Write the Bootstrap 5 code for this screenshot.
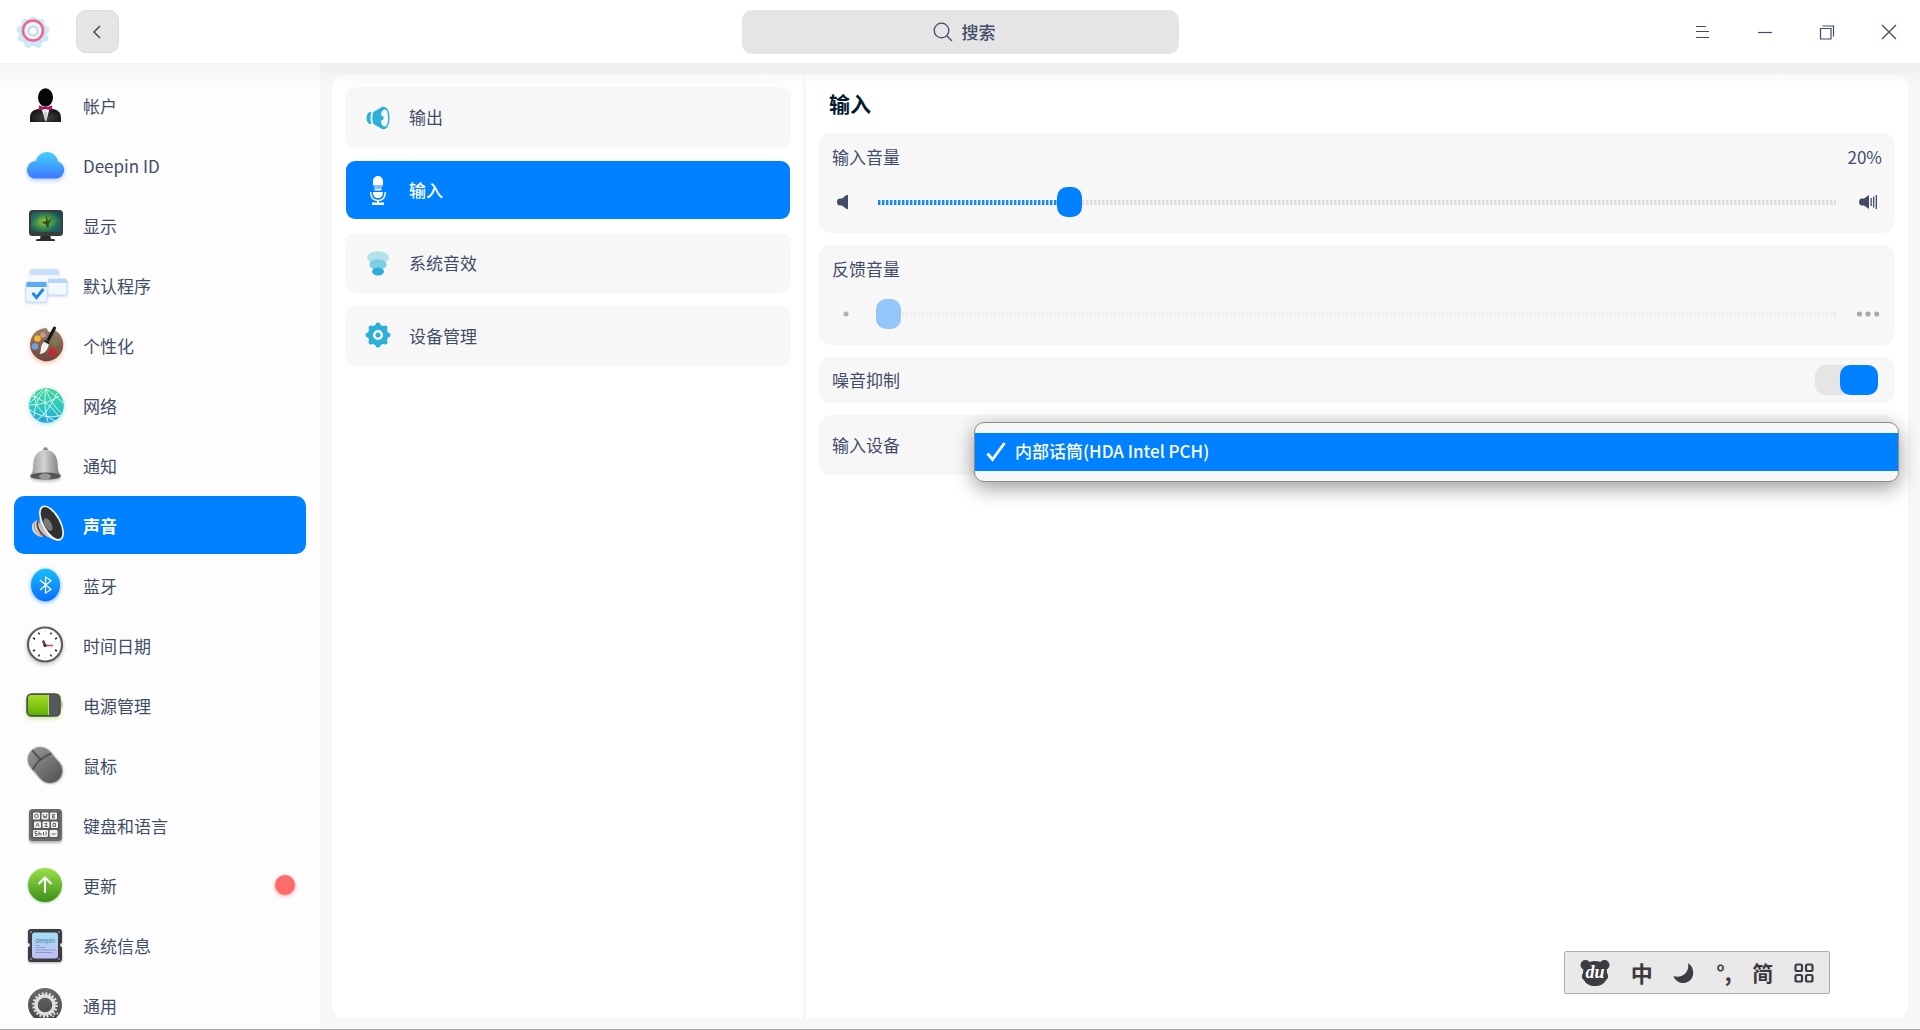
<!DOCTYPE html>
<html lang="zh-CN">
<head>
<meta charset="utf-8">
<meta name="viewport" content="width=device-width, initial-scale=1">
<title>控制中心</title>
<link href="https://cdn.jsdelivr.net/npm/bootstrap@5.3.0/dist/css/bootstrap.min.css" rel="stylesheet">
<style>
:root{--ink:#414d68;--accent:#0081ff;--panel:#f7f7f7}
body{font-family:"Noto Sans CJK SC","Noto Sans",sans-serif;font-size:17px;line-height:26px;color:var(--ink);background:var(--panel);border-bottom:1px solid #a8a8a8}
button{color:inherit}
.titlebar{height:63px;background:#fff;z-index:3}
.brand{width:43px;padding-left:15px}
.back{width:43px;height:43px;background:#e5e5e5;border:1px solid #dbdbdb;border-radius:10px;margin-left:33px}
.finder{width:437px;height:44px;background:#e5e5e5;border-radius:10px;padding-left:10px;gap:9px}
.finder input{width:36px;border:0;padding:0;background:none;outline:0;color:var(--ink)}
.finder input::placeholder{color:var(--ink);opacity:1;font-weight:500}
.side-zone{flex:1 1 0}
.winbtn{width:62px;height:62px;border:0;background:none}
.top-shade{background-image:linear-gradient(rgba(0,0,0,.034),rgba(0,0,0,0));background-repeat:no-repeat;background-size:100% 24px}
.sidebar{width:320px;background-color:#fdfdfd;padding-bottom:11px}
.sidebar .entries{padding:13px 14px 0;gap:2px;overflow:hidden}
.entry{height:58px;flex:none;border:0;background:none;border-radius:10px;padding:0 11px 0 7px;gap:14px;text-align:left}
.entry svg{flex:none}
.entry span:not(.dot-new){padding-top:1px}
.entry.on{background:var(--accent);color:#fff;font-weight:700}
.dot-new{width:20px;height:20px;border-radius:50%;background:#ff6a6a;box-shadow:0 1px 4px rgba(255,80,80,.55)}
.stage{padding:12px 12px 11px}
.sheet{background:#fff;border-radius:12px}
.sheet-shade{background-image:linear-gradient(rgba(0,0,0,.02),rgba(0,0,0,0));background-repeat:no-repeat;background-size:100% 16px}
.tabs-col{width:474px;flex:none;padding:12px 12px 0 13px;gap:13px;border-right:3px solid var(--panel)}
.tabx{height:60px;border:1px solid var(--panel);background:var(--panel);border-radius:10px;padding:0 16px;gap:15px;text-align:left}
.tabx.on{background:var(--accent);border-color:transparent;background-clip:padding-box;color:#fff;font-weight:500}
.detail{padding:12px 13px 0}
.detail h1{font-size:21px;line-height:32px;font-weight:700;color:#001a2e;margin:0 0 14px 10px}
.boxes{gap:12px}
.boxx{background:var(--panel);border-radius:12px;padding:11px 13px}
.slide-box{padding-bottom:16px}
.slide-row{margin-top:17px;height:30px}
.level{appearance:none;-webkit-appearance:none;background:none;height:30px;margin:0;min-width:0}
.level::-webkit-slider-runnable-track{height:30px;background-repeat:no-repeat;background-position:left 12px center;background-size:calc(100% - 24px) 5px;background-image:repeating-linear-gradient(90deg,#e0e0e0 0 2px,#ebebeb 2px 3px,transparent 3px 4px)}
.level::-webkit-slider-thumb{-webkit-appearance:none;width:25px;height:30px;border-radius:10px;background:var(--accent)}
.level.filled::-webkit-slider-runnable-track{background-image:linear-gradient(90deg,var(--panel),var(--panel)),repeating-linear-gradient(90deg,#1387f8 0 2px,#8ac3fa 2px 3px,transparent 3px 4px),repeating-linear-gradient(90deg,#e0e0e0 0 2px,#ebebeb 2px 3px,transparent 3px 4px);background-size:0 0,calc(20% - 4px) 5px,calc(100% - 24px) 5px}
.level:disabled::-webkit-slider-runnable-track{background-image:repeating-linear-gradient(90deg,#ededed 0 2px,#f2f2f2 2px 3px,transparent 3px 4px)}
.level:disabled::-webkit-slider-thumb{background:#94c6fa}
.row-sw{height:46px;padding:0 17px 0 13px}
.flip{appearance:none;-webkit-appearance:none;width:63px;height:30px;margin:0;border-radius:10px;background:#e5e5e5;display:flex;justify-content:flex-end}
.flip::before{content:"";width:38px;height:30px;border-radius:10px;background:#d0d0d0}
.flip:not(:checked){justify-content:flex-start}
.flip:checked::before{background:var(--accent)}
.row-dev{height:60px;padding:0 13px}
.devmenu{position:absolute;left:155px;right:-4px;top:7px;background:#f7f7f7;border:1px solid #8c8c8c;border-radius:10px;padding:10px 0;box-shadow:0 6px 20px rgba(0,0,0,.4);z-index:4}
.devmenu button{height:38px;border:0;background:var(--accent);color:#fff;padding:0 11px;gap:9px;font-weight:500}
.devmenu span{padding-bottom:2px}
.ime{position:absolute;right:90px;bottom:35px;width:266px;height:43px;background:#e9e9e9;border:1px solid #acacac;border-radius:2px;padding:0 15px;z-index:5;color:#3b3b3d}
.ime button{border:0;background:none;padding:0;display:flex;line-height:26px;font-weight:700}
.ime .big{font-size:22px;padding-bottom:2px}
.ime .mid{font-size:21px;padding-bottom:2px}
</style>
<script src="https://cdn.jsdelivr.net/npm/bootstrap@5.3.0/dist/js/bootstrap.bundle.min.js"></script>
</head>
<body class="vh-100 d-flex flex-column position-relative overflow-hidden">

<header class="titlebar d-flex align-items-center flex-shrink-0">
  <div class="side-zone d-flex align-items-center">
    <div class="brand">
      <svg width="36" height="36" viewBox="0 0 36 36" aria-label="控制中心" role="img">
        <defs><linearGradient id="gLogo" x1="0" y1="0" x2="1" y2="1"><stop offset="0" stop-color="#c3f1f8"/><stop offset="1" stop-color="#d6dcfa"/></linearGradient></defs>
        <g fill="url(#gLogo)"><circle cx="18" cy="18" r="14"/></g><g fill="#cdeafa"><circle cx="18" cy="6" r="3.500"/><circle cx="26" cy="8.500" r="3.500"/><circle cx="31" cy="15.500" r="3.500"/><circle cx="30" cy="24" r="3.500"/><circle cx="23" cy="30.500" r="3.500"/><circle cx="13" cy="30.500" r="3.500"/><circle cx="6" cy="24" r="3.500"/><circle cx="5" cy="15.500" r="3.500"/><circle cx="10" cy="8.500" r="3.500"/></g>
        <circle cx="18" cy="17" r="9" fill="#eaf6fd"/><circle cx="18" cy="17" r="4.500" fill="#fff" stroke="#cbdcec" stroke-width="2.500"/>
        <circle cx="18" cy="16.500" r="10" fill="none" stroke="#f2668c" stroke-width="2.600"/>
      </svg>
    </div>
    <button class="back d-flex align-items-center justify-content-center p-0" type="button" aria-label="返回"><svg width="16" height="16" viewBox="0 0 16 16" fill="none" stroke="#464f60" stroke-width="1.600"><path d="M10 2 4 8l6 6"/></svg></button>
  </div>
  <label class="finder d-flex align-items-center justify-content-center">
    <svg width="20" height="20" viewBox="0 0 20 20" fill="none" stroke="#414d68" stroke-width="1.300" aria-hidden="true"><circle cx="8.500" cy="8.500" r="7.300"/><path d="m13.700 13.700 5.300 5.300"/></svg>
    <input type="text" placeholder="搜索" aria-label="搜索">
  </label>
  <div class="side-zone d-flex justify-content-end">
    <button class="winbtn d-flex align-items-center justify-content-center" type="button" aria-label="菜单"><svg width="16" height="16" viewBox="0 0 16 16" stroke="#414d68" stroke-width="1.200"><path d="M1 2.500h10M1 7.500h13M1 13.500h13"/></svg></button>
    <button class="winbtn d-flex align-items-center justify-content-center" type="button" aria-label="最小化"><svg width="16" height="16" viewBox="0 0 16 16" stroke="#414d68" stroke-width="1.200"><path d="M1 8.500h14"/></svg></button>
    <button class="winbtn d-flex align-items-center justify-content-center" type="button" aria-label="还原"><svg width="16" height="16" viewBox="0 0 16 16" fill="none" stroke="#414d68" stroke-width="1.200"><path d="M1.500 4.500h10.500v10.500H1.500zM3.500 2h11v10.500"/></svg></button>
    <button class="winbtn d-flex align-items-center justify-content-center" type="button" aria-label="关闭"><svg width="16" height="16" viewBox="0 0 16 16" stroke="#414d68" stroke-width="1.300"><path d="m1 1 14 14M15 1 1 15"/></svg></button>
  </div>
</header>

<div class="d-flex flex-grow-1 overflow-hidden top-shade">
  <nav class="sidebar d-flex flex-column flex-shrink-0 top-shade" aria-label="模块">
    <div class="entries d-flex flex-column flex-grow-1">
      <button class="entry d-flex align-items-center" type="button">
        <svg width="48" height="48" viewBox="0 0 48 48"><defs><radialGradient id="gSuit" cx=".5" cy=".7" r=".6"><stop offset="0" stop-color="#444"/><stop offset="1" stop-color="#111"/></radialGradient></defs>
        <path d="M9 41V37c0-6 3-8 8-9l4-2h7l4 2c5 1 8 3 8 9v4z" fill="url(#gSuit)"/><path d="M20.500 28h8L25 41z" fill="#f3f3f3"/><path d="M24.500 30l1.500 2-.500 6-1 2-1-2-.500-6z" fill="#ccc"/><path d="M18 24.500l6.500 2 6.500-2v5l-6.500-1.500-6.500 1.500z" fill="#b0135e"/><ellipse cx="24.500" cy="16.500" rx="7.500" ry="9.300" fill="#060606"/></svg>
        <span>帐户</span></button>
      <button class="entry d-flex align-items-center" type="button">
        <svg width="48" height="48" viewBox="0 0 48 48"><defs><linearGradient id="gCloud" x2="0" y2="1"><stop offset="0" stop-color="#46d0fb"/><stop offset="1" stop-color="#3e78ff"/></linearGradient></defs>
        <path d="M13 37.500a9 9 0 0 1 3-17.500c1-5 5.500-9 11-9s10 4 11 9.500a8.700 8.700 0 0 1-1.500 17z" fill="url(#gCloud)" transform="translate(-1 0)" style="filter:drop-shadow(0 2px 2px rgba(70,130,255,.4))"/></svg>
        <span>Deepin ID</span></button>
      <button class="entry d-flex align-items-center" type="button">
        <svg width="48" height="48" viewBox="0 0 48 48"><defs><radialGradient id="gScr" cx=".45" cy=".5" r=".6"><stop offset="0" stop-color="#b4d234"/><stop offset=".4" stop-color="#4a9a4a"/><stop offset="1" stop-color="#164f58"/></radialGradient></defs>
        <path d="M20 33h9l1 5h3q1 0 1 2H15q0-2 1-2h3z" fill="#2c2c2c"/><rect x="8" y="9" width="34" height="26" rx="3.500" fill="#3a3c3c"/><rect x="10" y="11" width="30" height="20" rx="2" fill="url(#gScr)"/><path d="M11 12l10 0-10 10zM40 16l-12 14 12 1z" fill="#1b6a70" opacity=".5"/><path d="M25 14l2 6 4-3-3 6-1 5-2-4-5-3 5-1z" fill="#1d3b12" opacity=".8"/></svg>
        <span>显示</span></button>
      <button class="entry d-flex align-items-center" type="button">
        <svg width="48" height="48" viewBox="0 0 48 48"><g style="filter:drop-shadow(0 1px 1px rgba(60,120,200,.3))"><rect x="9" y="8" width="29" height="23" rx="2.500" fill="#f5f9fe"/><path d="M9 14v-3.500q0-2.500 2.500-2.500h24q2.500 0 2.500 2.500V14z" fill="#c8dffa"/><rect x="27" y="18" width="19" height="16" rx="2" fill="#f3f8fe" stroke="#c8dffa"/><path d="M27 22v-2q0-2 2-2h15q2 0 2 2v2z" fill="#b9d6f9"/><rect x="5" y="21" width="21" height="20" rx="1.500" fill="#eef5fd" stroke="#cfe2f8"/><path d="M5.500 26v-4q0-1 1-1h18q1 0 1 1v4z" fill="#5aa9f2"/></g><path d="m11.500 32 4 4.500L22.500 28" fill="none" stroke="#1d86f0" stroke-width="2.800"/></svg>
        <span>默认程序</span></button>
      <button class="entry d-flex align-items-center" type="button">
        <svg width="48" height="48" viewBox="0 0 48 48"><defs><linearGradient id="gPal" x2="0" y2="1"><stop offset="0" stop-color="#9a8171"/><stop offset="1" stop-color="#6a4437"/></linearGradient></defs>
        <path d="M24.500 7c2.500 0 1.500 3.500 4 4s4-3 6-1.500A16.600 16.600 0 1 1 24.500 7z" fill="url(#gPal)" style="filter:drop-shadow(0 2px 2px rgba(240,110,60,.45))"/><circle cx="16.500" cy="17.500" r="3.300" fill="#f6b62b"/><circle cx="22" cy="14" r="2.800" fill="#c69c85"/><circle cx="14" cy="25.500" r="3.300" fill="#6c9fe0"/><circle cx="31.500" cy="31" r="3.500" fill="#d51f35"/><circle cx="34" cy="22" r="2.800" fill="#74803e"/><path d="M33.500 7 27 19.500" stroke="#161616" stroke-width="3" stroke-linecap="round"/><path d="M24 18.500l5 3-1.500 3c-1 5-4 8-9 8.500 2-3 .500-8 4-11.500z" fill="#f4f1ec"/><path d="M24 18.500l5 3-1 2-5.300-3z" fill="#222"/></svg>
        <span>个性化</span></button>
      <button class="entry d-flex align-items-center" type="button">
        <svg width="48" height="48" viewBox="0 0 48 48"><defs><linearGradient id="gNet" x2="0" y2="1"><stop offset="0" stop-color="#45d692"/><stop offset=".6" stop-color="#2cc6c4"/><stop offset="1" stop-color="#2a9fdc"/></linearGradient></defs>
        <circle cx="25.500" cy="24.500" r="17.300" fill="url(#gNet)" style="filter:drop-shadow(0 1px 2px rgba(40,190,210,.5))"/><path d="M25 8c-6 6-11 14-12 27M25 8c3 9 8 17 15 24M25 8c-2 11-1 22 2 33M25 8c5 3 10 7 17 14M11 15c9 3 19 9 27 21M9 24c12 0 22-4 29-9M9 29c9 6 21 9 31 5M36 12c-5 11-12 22-20 27M14 12c-2 8 4 20 20 28M22 8 9 22" fill="none" stroke="#e9fffb" stroke-width="1" opacity=".85"/></svg>
        <span>网络</span></button>
      <button class="entry d-flex align-items-center" type="button">
        <svg width="48" height="48" viewBox="0 0 48 48"><defs><linearGradient id="gBell"><stop offset="0" stop-color="#9a9a9a"/><stop offset=".45" stop-color="#d2d2d2"/><stop offset="1" stop-color="#777"/></linearGradient></defs>
        <g style="filter:drop-shadow(0 2px 1px rgba(0,0,0,.2))"><circle cx="24.500" cy="8.500" r="2.300" fill="#8a8a8a"/><path d="M24.500 9c8 0 11.500 6 12 13 .500 6 0 8 3 12 2 3-4 5-15 5s-17-2-15-5c3-4 2.500-6 3-12 .500-7 4-13 12-13z" fill="url(#gBell)"/><ellipse cx="24.500" cy="35" rx="15" ry="3.600" fill="#555"/><ellipse cx="24" cy="35.500" rx="6" ry="3" fill="#999"/></g></svg>
        <span>通知</span></button>
      <button class="entry on d-flex align-items-center" type="button" aria-current="page">
        <svg width="48" height="48" viewBox="0 0 48 48"><defs><linearGradient id="gHorn"><stop offset="0" stop-color="#b8b8b8"/><stop offset="1" stop-color="#f4f4f4"/></linearGradient></defs>
        <path d="M12 22c-3 5 0 12 8 14l5-2-9-15z" fill="#d8d8d8"/><path d="M14 22c-2 4 0 10 7 13" stroke="#8a8a8a" fill="none"/><path d="M17 20c-2 4 1 13 8 15" stroke="#6d4a3a" fill="none" stroke-width="2"/><path d="M20 10c-3 12-2 21 5 25 6 3 11 6 15 4z" fill="url(#gHorn)"/><ellipse cx="30.500" cy="22" rx="8.500" ry="18.500" transform="rotate(-29 30.500 22)" fill="#303030" stroke="#f5f5f5" stroke-width="1.700"/><ellipse cx="27" cy="23.500" rx="3.500" ry="7" transform="rotate(-29 27 23.500)" fill="#7b7b7b"/></svg>
        <span>声音</span></button>
      <button class="entry d-flex align-items-center" type="button">
        <svg width="48" height="48" viewBox="0 0 48 48"><defs><linearGradient id="gBt" x2="0" y2="1"><stop offset="0" stop-color="#15bff8"/><stop offset="1" stop-color="#0a6cff"/></linearGradient></defs>
        <ellipse cx="24.500" cy="24" rx="14.500" ry="16.300" fill="url(#gBt)" style="filter:drop-shadow(0 1px 2px rgba(20,140,255,.7))"/><path d="m19 19 11 9.500-5.500 3.500V16L30 19.500 19 29" fill="none" stroke="#fff" stroke-width="1.200"/></svg>
        <span>蓝牙</span></button>
      <button class="entry d-flex align-items-center" type="button">
        <svg width="48" height="48" viewBox="0 0 48 48"><g style="filter:drop-shadow(0 2px 2px rgba(0,0,0,.25))"><circle cx="24" cy="23.500" r="17" fill="#fff" stroke="#5d5d5d" stroke-width="2.200"/></g><g stroke="#222" stroke-width="1.400"><path d="M17.500 11.500l1 2M30.500 11.500l-1 2M12 17l2 1M36 17l-2 1M12 30l2-1M36 30l-2-1M17.500 35.500l1-2M30.500 35.500l-1-2"/></g><g stroke="#ccc" stroke-width="1"><path d="M24 9.500v1.500M24 36v1.500M10 23.500h1.500M36.500 23.500H38"/></g><path d="M24 24.500l-2-5" stroke="#444" stroke-width="2.400"/><path d="M24 24.500h8" stroke="#e04b4b" stroke-width="1.600"/><circle cx="24" cy="24.500" r="1.600" fill="#333"/></svg>
        <span>时间日期</span></button>
      <button class="entry d-flex align-items-center" type="button">
        <svg width="48" height="48" viewBox="0 0 48 48"><defs><linearGradient id="gBat" x2="0" y2="1"><stop offset="0" stop-color="#a6dc2c"/><stop offset="1" stop-color="#5fb200"/></linearGradient></defs>
        <path d="M38 19q4 0 4 4.500T38 28z" fill="#c9c9c9"/><g style="filter:drop-shadow(0 2px 2px rgba(120,200,0,.4))"><rect x="6" y="13" width="33" height="22" rx="4.500" fill="#55585c" stroke="#4a4d44" stroke-width="1.500"/></g><path d="M7 17q0-3 3-3h17v20H10q-3 0-3-3z" fill="url(#gBat)"/><path d="M27.500 14v20" stroke="#b8e36a"/></svg>
        <span>电源管理</span></button>
      <button class="entry d-flex align-items-center" type="button">
        <svg width="48" height="48" viewBox="0 0 48 48"><defs><linearGradient id="gMs" x2="0" y2="1"><stop offset="0" stop-color="#929292"/><stop offset="1" stop-color="#565656"/></linearGradient></defs>
        <g transform="rotate(-41 24 24)" style="filter:drop-shadow(0 1px 1px rgba(0,0,0,.3))"><rect x="11.500" y="4" width="25" height="40" rx="12.500" fill="url(#gMs)"/><path d="M11.500 19.500q12.500-5 25 0M24 4.500v12.500" fill="none" stroke="#3f3f3f" stroke-width="1.500"/></g></svg>
        <span>鼠标</span></button>
      <button class="entry d-flex align-items-center" type="button">
        <svg width="48" height="48" viewBox="0 0 48 48"><rect x="8" y="8" width="33" height="32" rx="3.500" fill="#6c6c6c" style="filter:drop-shadow(0 2px 1px rgba(0,0,0,.3))"/><rect x="10.500" y="10.500" width="28" height="27" rx="1" fill="#5a5a5a"/><g fill="#f1f1f1"><rect x="12" y="11.500" width="7" height="7" rx="1"/><rect x="20.500" y="11.500" width="7" height="7" rx="1"/><rect x="29" y="11.500" width="7" height="7" rx="1"/><rect x="13" y="20.500" width="7" height="6.500" rx="1"/><rect x="21.500" y="20.500" width="7" height="6.500" rx="1"/><rect x="30" y="20.500" width="7" height="6.500" rx="1"/><rect x="12" y="29" width="15" height="7" rx="1"/><rect x="28.500" y="29" width="8" height="7" rx="1"/></g><g fill="none" stroke="#666" stroke-width="1"><circle cx="15.500" cy="15" r="1.800"/><path d="M22 13l1 4 1-2 1 2 1-4M34 13.500h-2.500v3.500H34M31.500 15.200H34M15 25.500l1.500-3.500 1.500 3.500M23.500 22.500h2.500l-2 3h2.500M32 22.500v3h2.500v-3zM14 34.500h2v-2h-2v-2h2M18 30.500v4M18 32.500h2v2M22.500 31v3.500M25 34.500v-4M30.500 33h4"/></g></svg>
        <span>键盘和语言</span></button>
      <button class="entry d-flex align-items-center" type="button">
        <svg width="48" height="48" viewBox="0 0 48 48"><defs><linearGradient id="gUp" x2="0" y2="1"><stop offset="0" stop-color="#9be04a"/><stop offset="1" stop-color="#3a8f17"/></linearGradient></defs>
        <circle cx="24" cy="24" r="17" fill="url(#gUp)" style="filter:drop-shadow(0 1px 1px rgba(60,160,30,.5))"/><path d="M24 32V16.500M17.500 23 24 16.500 30.500 23" fill="none" stroke="#fff" stroke-width="2"/></svg>
        <span class="flex-grow-1">更新</span><span class="dot-new" role="status" aria-label="有更新"></span></button>
      <button class="entry d-flex align-items-center" type="button">
        <svg width="48" height="48" viewBox="0 0 48 48"><defs><linearGradient id="gSys" x2="0" y2="1"><stop offset="0" stop-color="#a3dff2"/><stop offset="1" stop-color="#c4bdf3"/></linearGradient></defs>
        <path d="M10 8h28q3 0 3 3v11q-2 0-2 2t2 2v12q0 3-3 3H10q-3 0-3-3V26q2 0 2-2t-2-2V11q0-3 3-3z" fill="#3c3d42" style="filter:drop-shadow(0 1px 1px rgba(0,0,0,.3))"/><rect x="11" y="11.500" width="26" height="26" rx="3" fill="url(#gSys)"/><g fill="#99a"><circle cx="10" cy="11" r=".900"/><circle cx="38" cy="11" r=".900"/><circle cx="10" cy="38" r=".900"/><circle cx="38" cy="38" r=".900"/></g><text x="24" y="21.500" font-size="6" text-anchor="middle" fill="#3f7fb2" font-family="Inter,sans-serif">deepin</text><path d="M14.500 24.500h4M14.500 26.500h10M14.500 29h20M14.500 31.500h17" stroke="#8a91d4" stroke-width=".900"/></svg>
        <span>系统信息</span></button>
      <button class="entry d-flex align-items-center" type="button">
        <svg width="48" height="48" viewBox="0 0 48 48"><defs><linearGradient id="gGen" x2="0" y2="1"><stop offset="0" stop-color="#6a6a6a"/><stop offset="1" stop-color="#444"/></linearGradient></defs>
        <circle cx="24" cy="24" r="17" fill="url(#gGen)"/><circle cx="24" cy="24" r="11.500" fill="none" stroke="#e2e2e2" stroke-width="2.500" stroke-dasharray="2 1.610"/><circle cx="24" cy="24" r="9" fill="none" stroke="#dedede" stroke-width="3.500"/><path d="M32 36a4 4 0 0 1 6-3" fill="none" stroke="#ccc" stroke-width="2" stroke-dasharray="1.500 1"/></svg>
        <span>通用</span></button>
    </div>
  </nav>

  <main class="stage flex-grow-1 d-flex">
    <div class="sheet sheet-shade d-flex flex-grow-1">
      <div class="tabs-col d-flex flex-column">
        <button class="tabx d-flex align-items-center" type="button">
          <svg width="32" height="32" viewBox="0 0 32 32" fill="#2cafd8"><path d="M9.500 11H7.500C3.500 13 3.500 21 7.500 23h2c-1.300-3-1.300-9 0-12z"/><path d="M11.500 11 20 6c3-.800 7.500 1 7.500 11s-4.500 12-7.500 11l-8.500-5c-1.500-3-1.500-9 0-12zM23 8.500c-3 0-4 4-4 6 3.500 0 3.500 5 0 5 0 2.500 1 6 4 6 2.500 0 3-4.500 3-8.500s-.500-8.500-3-8.500z" fill-rule="evenodd"/></svg>
          <span>输出</span></button>
        <button class="tabx on d-flex align-items-center" type="button" aria-current="true">
          <svg width="32" height="32" viewBox="0 0 32 32" fill="#fff"><path d="M11 11.500V7a5 5 0 0 1 10 0v4.500zM12 12.500h8v1h-8zM12.500 14.500h7v2h-7zM11 18h10c0 4-2 6-5 6s-5-2-5-6z"/><path d="M8.700 18c0 6 3 8.500 7.300 8.500s7.300-2.500 7.300-8.500" fill="none" stroke="#fff" stroke-width="1.400"/><path d="M15 26h2v2.500h5V31H10v-2.500h5z"/></svg>
          <span>输入</span></button>
        <button class="tabx d-flex align-items-center" type="button">
          <svg width="32" height="32" viewBox="0 0 32 32"><ellipse cx="16" cy="10.500" rx="11" ry="6.300" fill="#b2e2ea"/><ellipse cx="16" cy="17.500" rx="8.700" ry="5.200" fill="#7fcde2"/><ellipse cx="16" cy="24.500" rx="6" ry="4" fill="#2cafd8"/></svg>
          <span>系统音效</span></button>
        <button class="tabx d-flex align-items-center" type="button">
          <svg width="32" height="32" viewBox="0 0 32 32"><circle cx="16" cy="15" r="7" fill="none" stroke="#2cafd8" stroke-width="6.500"/><g fill="#2cafd8"><circle cx="16" cy="5" r="2.500"/><circle cx="16" cy="25" r="2.500"/><circle cx="6" cy="15" r="2.500"/><circle cx="26" cy="15" r="2.500"/><circle cx="9" cy="8" r="2.500"/><circle cx="23" cy="8" r="2.500"/><circle cx="9" cy="22" r="2.500"/><circle cx="23" cy="22" r="2.500"/></g><circle cx="16" cy="15" r="3.800" fill="#2cafd8" stroke="#fff" stroke-width="2.500"/></svg>
          <span>设备管理</span></button>
      </div>

      <section class="detail flex-grow-1">
        <h1>输入</h1>
        <div class="boxes d-flex flex-column">
          <div class="boxx slide-box">
            <div class="d-flex justify-content-between"><label for="vol">输入音量</label><output class="p-0" for="vol">20%</output></div>
            <div class="slide-row d-flex align-items-center">
              <svg width="34" height="16" viewBox="0 0 34 16" fill="#414d68" class="flex-shrink-0"><path d="M8 4.500h2L14.500 1H16v14h-1.500L10 11.500H8q-3 0-3-3.500t3-3.500z"/></svg>
              <input class="level filled flex-grow-1" id="vol" type="range" min="0" max="100" value="20">
              <svg width="34" height="16" viewBox="0 0 34 16" fill="#414d68" class="flex-shrink-0"><path d="M13 4.500h3L21 1v14l-5-3.500h-3q-2-.500-2-3.500t2-3.500z"/><path d="M22.500 4h1.300v8h-1.300zM25 2.500h1.300v11H25zM27.700 1H29v14h-1.300z"/></svg>
            </div>
          </div>
          <div class="boxx slide-box">
            <div class="d-flex"><label for="fb">反馈音量</label></div>
            <div class="slide-row d-flex align-items-center">
              <svg width="34" height="16" viewBox="0 0 34 16" fill="#b0b0b0" class="flex-shrink-0"><circle cx="14" cy="8" r="2.500"/></svg>
              <input class="level flex-grow-1" id="fb" type="range" min="0" max="100" value="1" disabled>
              <svg width="34" height="16" viewBox="0 0 34 16" fill="#a9a9a9" class="flex-shrink-0"><circle cx="11.500" cy="8" r="2.600"/><circle cx="20" cy="8" r="2.600"/><circle cx="28.700" cy="8" r="2.600"/></svg>
            </div>
          </div>
          <div class="boxx row-sw d-flex align-items-center justify-content-between">
            <label for="noise">噪音抑制</label>
            <input class="flip" id="noise" type="checkbox" role="switch" checked>
          </div>
          <div class="boxx row-dev d-flex align-items-center position-relative">
            <span id="devlabel">输入设备</span>
            <div class="devmenu" role="listbox" aria-labelledby="devlabel">
              <button class="d-flex align-items-center w-100" type="button" role="option" aria-selected="true">
                <svg width="20" height="20" viewBox="0 0 20 20" fill="none" stroke="#fff" stroke-width="2.800"><path d="m1.500 11.500 5 6L18.500 1"/></svg>
                <span>内部话筒(HDA Intel PCH)</span></button>
            </div>
          </div>
        </div>
      </section>
    </div>
  </main>
</div>

<div class="ime d-flex align-items-center justify-content-between" role="toolbar" aria-label="输入法">
  <button type="button" aria-label="百度输入法"><svg width="30" height="28" viewBox="0 0 30 28"><g fill="#3b3d42"><circle cx="5.500" cy="6" r="5"/><circle cx="24.500" cy="6" r="5"/><path d="M15 2c8 0 12 5 12 12 2 3 1 6-1 7-2 4-6 6-11 6S6 25 4 21c-2-1-3-4-1-7C3 7 7 2 15 2z"/></g><text x="15" y="19" font-family="Liberation Serif,serif" font-style="italic" font-size="18" text-anchor="middle" fill="#fff">du</text></svg></button>
  <button type="button" class="big">中</button>
  <button type="button" aria-label="半角"><svg width="22" height="22" viewBox="0 0 22 22" fill="#3b3d42"><path d="M15 1c8 5 7 19-4 20-5 .300-9-2.500-10.500-7C8 17 17 11 15 1z"/></svg></button>
  <button type="button" class="mid">°,</button>
  <button type="button" class="mid">简</button>
  <button type="button" aria-label="工具箱"><svg width="20" height="20" viewBox="0 0 20 20" fill="none" stroke="#3b3d42" stroke-width="2.200"><rect x="1.500" y="1.500" width="6.500" height="6.500" rx="1.500"/><rect x="12" y="1.500" width="6.500" height="6.500" rx="1.500"/><rect x="1.500" y="12" width="6.500" height="6.500" rx="1.500"/><rect x="12" y="12" width="6.500" height="6.500" rx="1.500"/></svg></button>
</div>
</body>
</html>
